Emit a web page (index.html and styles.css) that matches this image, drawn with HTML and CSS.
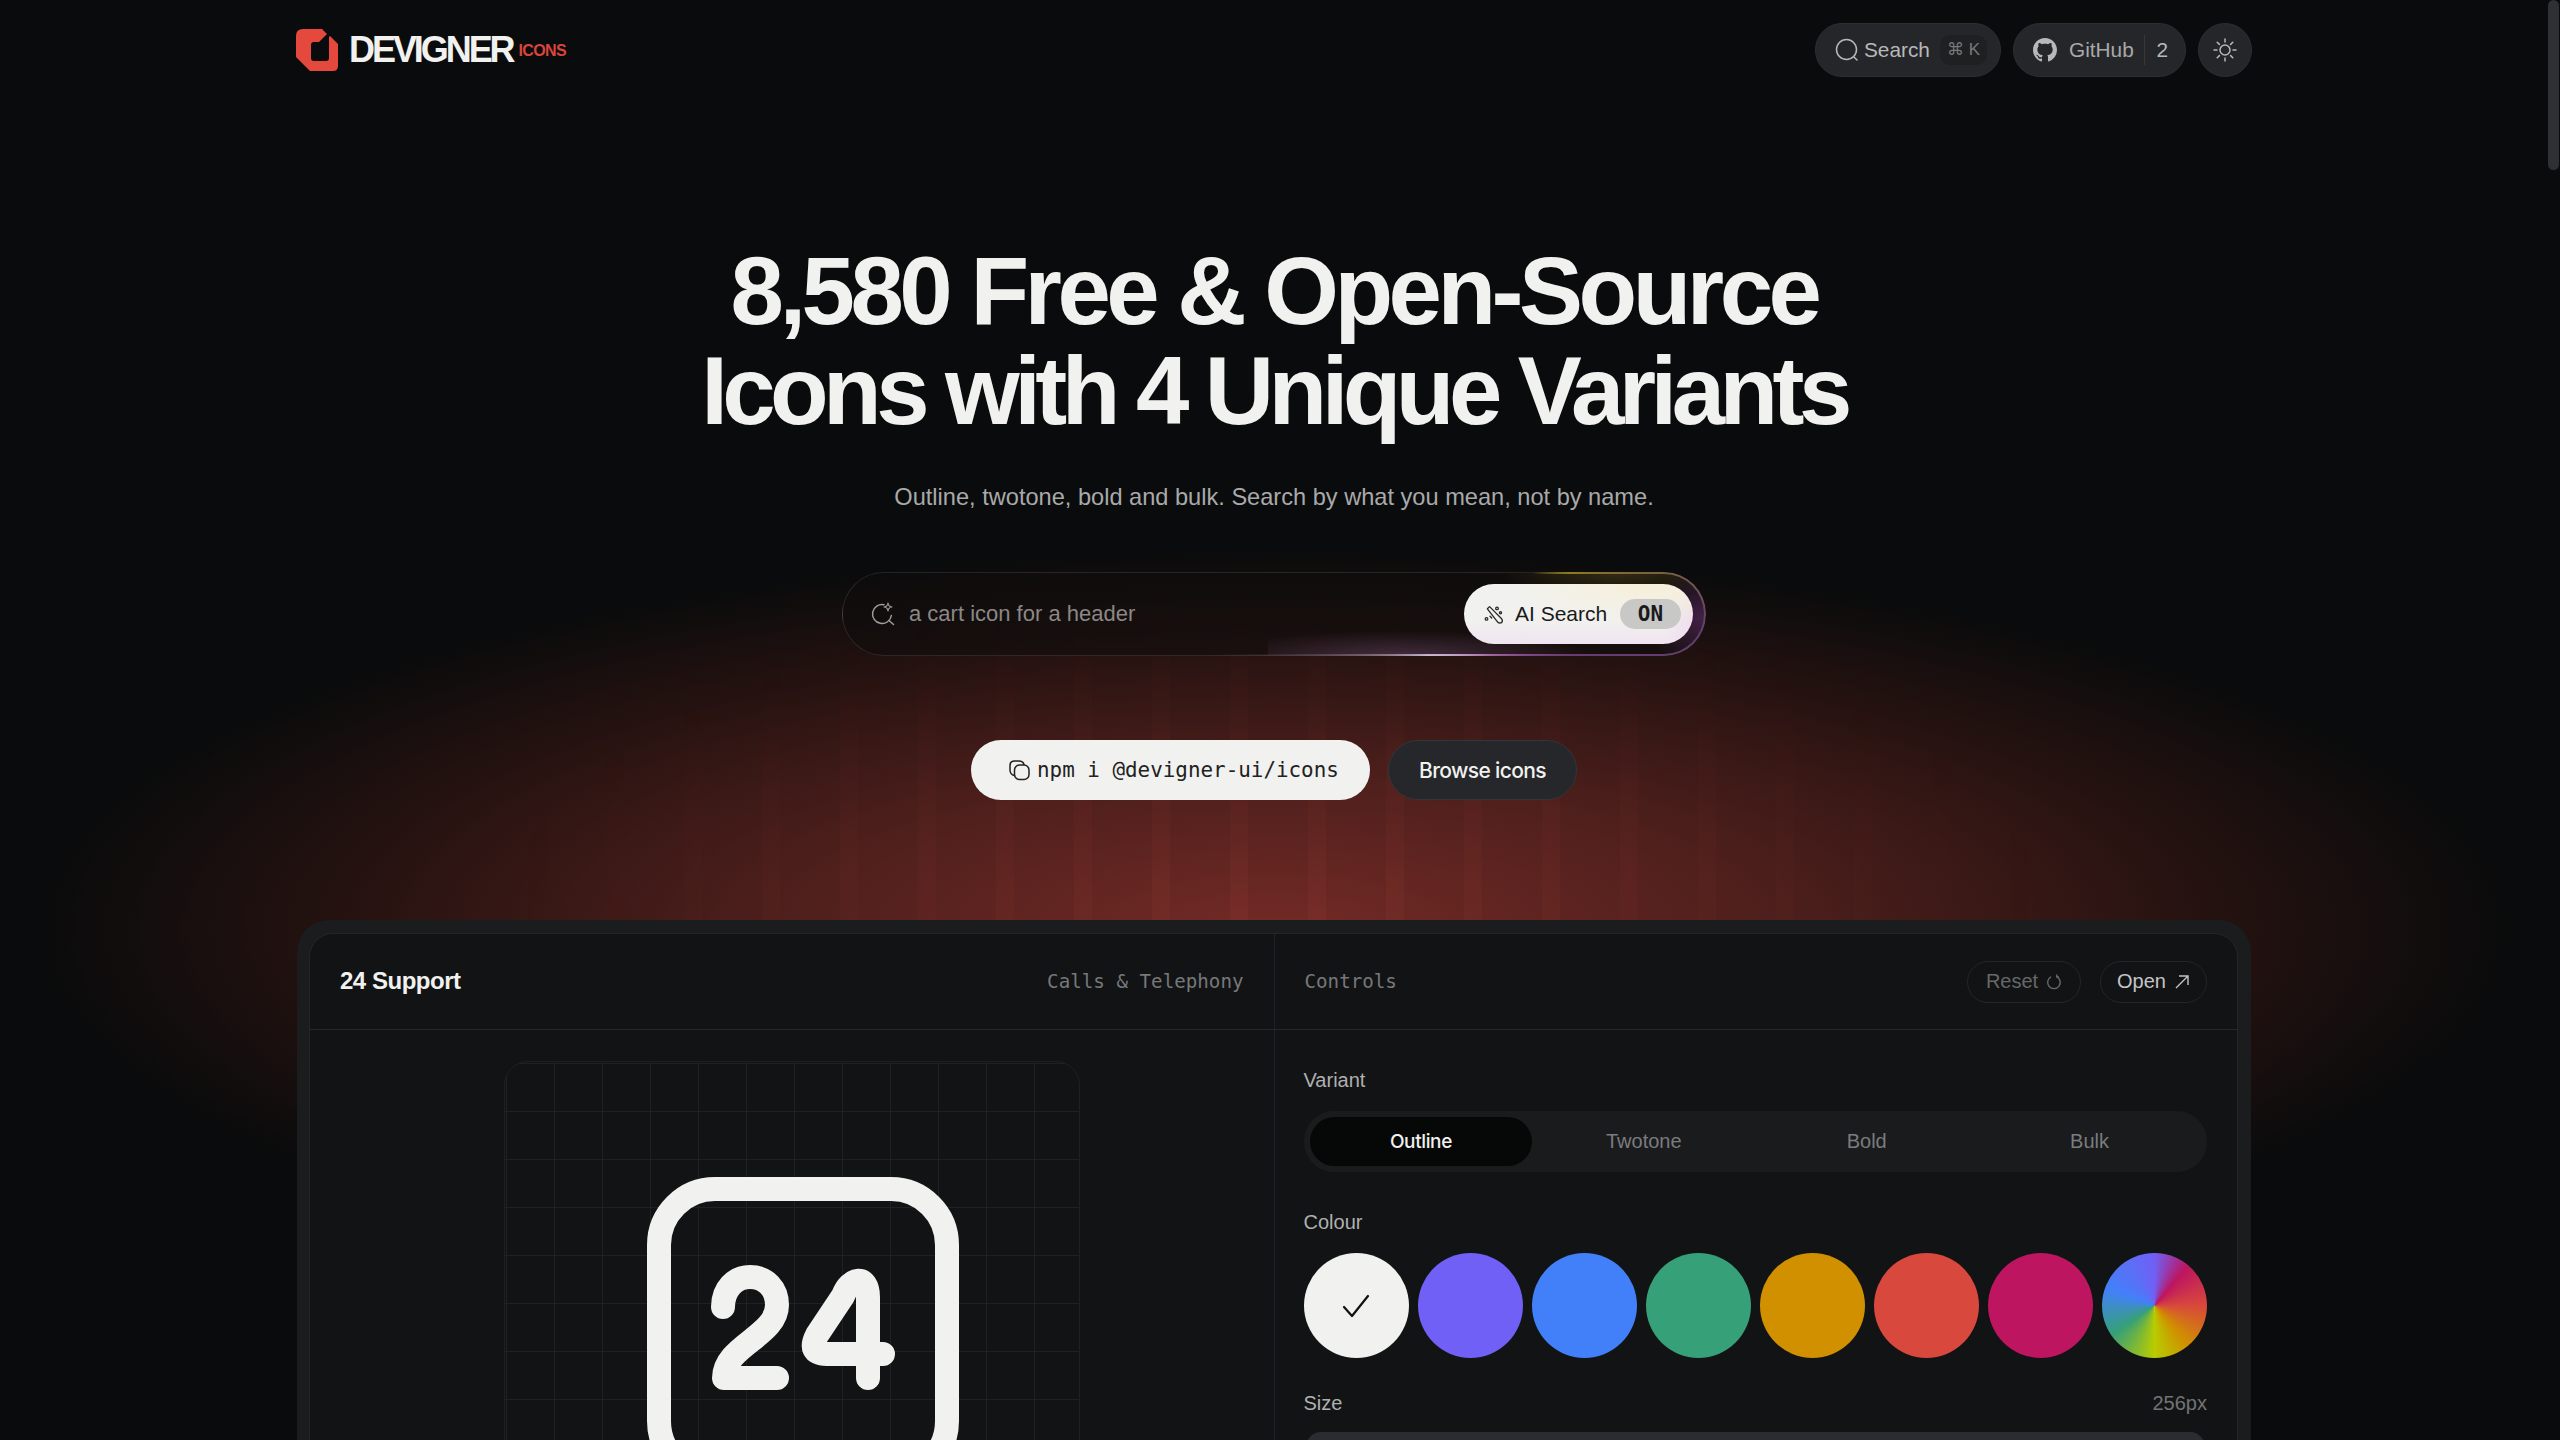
FILE: index.html
```html
<!DOCTYPE html>
<html lang="en">
<head>
    <meta charset="UTF-8">
    <meta name="viewport" content="width=device-width, initial-scale=1.0">
    <title>Devigner Icons</title>
    <link rel="stylesheet" href="styles.css">
</head>
<body>
    <div class="scroll-thumb"></div>

    <div class="page">
        <div class="glow"></div>

        <header class="nav">
            <a class="logo" href="#">
                <svg class="logo-mark" viewBox="0 0 42 42"><path d="M7 0H26L31 5L23 13H18Q15 13 15 16V29Q15 32 18 32H30Q33 32 33 29V8L34 7L42 15V37Q42 42 37 42H14L0 28V7Q0 0 7 0Z"/></svg>
                <span class="logo-name">DEVIGNER</span>
                <span class="logo-tag">ICONS</span>
            </a>
            <div class="nav-actions">
                <button class="nav-btn nav-search">
                    <svg class="icon-24" viewBox="0 0 24 24"><circle cx="11.5" cy="11.5" r="10"/><path d="M19 19l3 3"/></svg>
                    <span>Search</span>
                    <kbd class="kbd">⌘ K</kbd>
                </button>
                <button class="nav-btn nav-github">
                    <svg class="github-mark" viewBox="0 0 16 16"><path d="M8 0C3.58 0 0 3.58 0 8c0 3.54 2.29 6.53 5.47 7.59.4.07.55-.17.55-.38 0-.19-.01-.82-.01-1.49-2.01.37-2.53-.49-2.69-.94-.09-.23-.48-.94-.82-1.13-.28-.15-.68-.52-.01-.53.63-.01 1.08.58 1.23.82.72 1.21 1.87.87 2.33.66.07-.52.28-.87.51-1.07-1.78-.2-3.64-.89-3.64-3.95 0-.87.31-1.59.82-2.15-.08-.2-.36-1.02.08-2.12 0 0 .67-.21 2.2.82.64-.18 1.32-.27 2-.27.68 0 1.36.09 2 .27 1.53-1.04 2.2-.82 2.2-.82.44 1.1.16 1.92.08 2.12.51.56.82 1.27.82 2.15 0 3.07-1.87 3.75-3.65 3.95.29.25.54.73.54 1.48 0 1.07-.01 1.93-.01 2.2 0 .21.15.46.55.38A8.013 8.013 0 0016 8c0-4.42-3.58-8-8-8z"/></svg>
                    <span class="github-label">GitHub</span>
                    <span class="github-count">2</span>
                </button>
                <button class="nav-btn nav-theme">
                    <svg class="icon-24" viewBox="0 0 24 24"><circle cx="12" cy="12" r="5"/><path d="M12 1v3M12 20v3M1 12h3M20 12h3M4.2 4.2l2.2 2.2M17.6 17.6l2.2 2.2M4.2 19.8l2.2-2.2M17.6 6.4l2.2-2.2"/></svg>
                </button>
            </div>
        </header>

        <section class="hero">
            <h1>
                <span class="hero-line hero-line-top">8,580 Free &amp; Open-Source</span>
                <span class="hero-line hero-line-bottom">Icons with 4 Unique Variants</span>
            </h1>
            <p class="hero-sub">Outline, twotone, bold and bulk. Search by what you mean, not by name.</p>

            <div class="ai-bar">
                <div class="ai-input">
                    <svg class="icon-24" viewBox="0 0 24 24"><path d="M13 2.700A9.500 9.500 0 1 0 20.400 13.500"/><path d="M18 18.500l4.500 4"/><path class="icon-thin" d="M17 1c.3 2.700 1.300 3.700 4 4-2.700.3-3.700 1.300-4 4-.3-2.700-1.300-3.700-4-4 2.700-.3 3.700-1.300 4-4z"/></svg>
                    <span>a cart icon for a header</span>
                </div>
                <button class="ai-toggle">
                    <svg class="icon-wand" viewBox="0 0 24 24"><path d="M5 5.500L7.500 3L21 16.500Q23 19 21.500 21Q19.500 22.500 17 21Z"/><circle cx="16" cy="5" r="1.500"/><circle cx="20" cy="10" r="1.200"/><circle cx="4" cy="17" r="1.500"/><path d="M8 14l2 2"/></svg>
                    <span class="ai-label">AI Search</span>
                    <span class="ai-state">ON</span>
                </button>
            </div>

            <div class="cta-row">
                <button class="cta cta-install">
                    <svg class="icon-24" viewBox="0 0 24 24"><path d="M7.500 17.500Q3 16.500 3 12V7.500Q3 3 7.500 3H12Q16 3 17 6.500"/><rect x="7.500" y="7" width="14.500" height="14.500" rx="5"/></svg>
                    <span>npm i @devigner-ui/icons</span>
                </button>
                <button class="cta cta-browse">Browse icons</button>
            </div>
        </section>

        <section class="card">
            <div class="card-inner">
                <div class="pane">
                    <div class="pane-head">
                        <span class="icon-name">24 Support</span>
                        <span class="mono-note">Calls &amp; Telephony</span>
                    </div>
                    <div class="preview">
                        <div class="preview-grid">
                            <svg class="preview-icon" viewBox="0 0 576 576">
                                <rect x="154" y="127" width="288" height="288" rx="56"/>
                                <path d="M218 245C218 227 230 215 245 215C261 215 272 227 272 243C272 274 219 284 219 316L272 316"/>
                                <path d="M363 316V235C363 212 345 215 338 234L312 273Q302 292 322 292H378"/>
                            </svg>
                        </div>
                    </div>
                </div>

                <div class="pane pane-controls">
                    <div class="pane-head">
                        <span class="mono-note">Controls</span>
                        <div class="head-actions">
                            <button class="chip chip-muted">Reset
                                <svg class="icon-16" viewBox="0 0 16 16"><path d="M10.500 2.600A6.300 6.300 0 1 1 5 2.800"/><path d="M10.700 0.500v2.400h2.300"/></svg>
                            </button>
                            <button class="chip chip-open">Open
                                <svg class="icon-16" viewBox="0 0 16 16"><path d="M2 14L14 2M5 2h9v9"/></svg>
                            </button>
                        </div>
                    </div>
                    <div class="controls">
                        <div class="field-label">Variant</div>
                        <div class="segments">
                            <span class="segment active">Outline</span>
                            <span class="segment">Twotone</span>
                            <span class="segment">Bold</span>
                            <span class="segment">Bulk</span>
                        </div>

                        <div class="field-label colour-label">Colour</div>
                        <div class="swatches">
                            <span class="swatch swatch-white">
                                <svg class="icon-check" viewBox="0 0 28 28"><path d="M2 15l8 9L26 4"/></svg>
                            </span>
                            <span class="swatch swatch-violet"></span>
                            <span class="swatch swatch-blue"></span>
                            <span class="swatch swatch-green"></span>
                            <span class="swatch swatch-amber"></span>
                            <span class="swatch swatch-red"></span>
                            <span class="swatch swatch-pink"></span>
                            <span class="swatch swatch-multi"></span>
                        </div>

                        <div class="field-label size-label">
                            <span>Size</span>
                            <span class="size-value">256px</span>
                        </div>
                        <div class="slider"></div>
                    </div>
                </div>
            </div>
        </section>
    </div>
</body>
</html>
```

FILE: styles.css
```css
* {
    box-sizing: border-box;
}

html, body {
    margin: 0;
    height: 100%;
    overflow: hidden;
    background: #0a0b0c;
}

body {
    font-family: 'Liberation Sans', Inter, sans-serif;
    color: #f1f1ef;
    padding-right: 12px;
}

button {
    font: inherit;
    color: inherit;
    border: none;
    background: none;
    padding: 0;
}

svg {
    display: block;
    flex: none;
}

.scroll-thumb {
    position: fixed;
    top: 0;
    right: 1px;
    width: 11px;
    height: 170px;
    border-radius: 6px;
    background: #2f3033;
}

.page {
    position: relative;
    height: 1440px;
    padding: 0 296px;
    overflow: hidden;
}

/* red wash behind the hero */
.glow {
    position: absolute;
    inset: 0;
    background: radial-gradient(ellipse 1240px 380px at 1274px 930px, #732a26 0, #4e1f1c 40%, #241210 76%, transparent 100%);
}

.glow::before {
    content: "";
    position: absolute;
    inset: 0;
    background: linear-gradient(90deg, rgba(255, 110, 90, 0.06) 18px, transparent 18px) 60px 0 / 78px 100%;
    -webkit-mask-image: radial-gradient(ellipse 800px 350px at 1274px 930px, #000 0, transparent 100%);
    mask-image: radial-gradient(ellipse 800px 350px at 1274px 930px, #000 0, transparent 100%);
}

.nav,
.hero,
.card {
    position: relative;
}

/* nav */
.nav {
    display: flex;
    align-items: center;
    justify-content: space-between;
    padding-top: 23px;
}

.logo {
    display: flex;
    align-items: center;
    text-decoration: none;
}

.logo-mark {
    width: 42px;
    height: 42px;
    fill: #e5483d;
}

.logo-name {
    margin-left: 11px;
    font-weight: 700;
    font-size: 36px;
    letter-spacing: -0.085em;
    color: #f1f1ef;
}

.logo-tag {
    margin: 2px 0 0 6px;
    font-weight: 700;
    font-size: 16px;
    letter-spacing: -0.04em;
    color: #d8453b;
}

.nav-actions {
    display: flex;
    gap: 12px;
}

.nav-btn {
    display: flex;
    align-items: center;
    height: 54px;
    border-radius: 27px;
    border: 1px solid #2d2e31;
    background: #252629;
    color: #b8b8ba;
    font-size: 20.8px;
}

.icon-24 {
    width: 24px;
    height: 24px;
    fill: none;
    stroke: currentColor;
    stroke-width: 1.5;
    stroke-linecap: round;
    stroke-linejoin: round;
}

.icon-thin {
    stroke-width: 1.2;
}

.nav-search {
    width: 186px;
    padding: 0 13px 0 19px;
    gap: 5px;
}

.kbd {
    display: block;
    flex: none;
    margin-left: auto;
    padding: 0 7px;
    height: 30px;
    line-height: 30px;
    border-radius: 10px;
    background: #1f2022;
    color: #77787b;
    font-family: 'Liberation Sans', 'DejaVu Sans', sans-serif;
    font-size: 17px;
    white-space: nowrap;
}

.nav-github {
    width: 173px;
    padding: 0 17px 0 19px;
}

.github-mark {
    width: 24px;
    height: 24px;
    fill: #b8b8ba;
}

.github-label {
    margin-left: 12px;
    color: #a8a8aa;
}

.github-count {
    margin-left: auto;
    padding-left: 11px;
    border-left: 1px solid #36373a;
    line-height: 30px;
}

.nav-theme {
    width: 54px;
    justify-content: center;
}

/* hero */
.hero {
    text-align: center;
}

.hero h1 {
    margin: 164px 0 0;
    font-size: 96px;
    line-height: 100px;
    font-weight: 700;
}

.hero-line {
    display: block;
}

.hero-line-top {
    letter-spacing: -0.047em;
}

.hero-line-bottom {
    letter-spacing: -0.058em;
}

.hero-sub {
    margin: 40px 0 0;
    font-size: 23.6px;
    line-height: 32px;
    color: #a9a9a9;
}

.ai-bar {
    position: relative;
    display: flex;
    align-items: center;
    justify-content: space-between;
    width: 864px;
    height: 84px;
    margin: 59px auto 0;
    padding: 0 12px 0 28px;
    border-radius: 42px;
    border: 1px solid rgba(255, 255, 255, 0.1);
    background:
        radial-gradient(ellipse 60px 50px at 100% 55%, rgba(110, 50, 120, 0.55), transparent),
        radial-gradient(ellipse 120px 24px at 90% 0, rgba(120, 105, 30, 0.35), transparent),
        rgba(14, 12, 12, 0.55);
    text-align: left;
}

/* coloured rim, only shows on the right half */
.ai-bar::before {
    content: "";
    position: absolute;
    inset: -1px;
    padding: 2px;
    border-radius: 42px;
    background: conic-gradient(from 0deg at 76% 50%, transparent 40deg, #8f7d1e 60deg, #5f3f70 95deg, #6b3a70 120deg, #a060a0 190deg, #c8bcd0 240deg, transparent 262deg, transparent 360deg);
    -webkit-mask: linear-gradient(#000 0 0) content-box, linear-gradient(#000 0 0);
    -webkit-mask-composite: xor;
    mask-composite: exclude;
}

/* soft light along the bottom edge */
.ai-bar::after {
    content: "";
    position: absolute;
    left: 425px;
    right: 60px;
    bottom: 0;
    height: 24px;
    border-radius: 0 0 30px 0;
    background: radial-gradient(ellipse 50% 100% at 35% 100%, rgba(190, 130, 200, 0.24), transparent);
}

.ai-input {
    display: flex;
    align-items: center;
    gap: 14px;
    color: #8b8886;
    font-size: 22px;
}

.ai-input .icon-24 {
    color: #a09d9b;
}

.ai-toggle {
    position: relative;
    z-index: 1;
    display: flex;
    align-items: center;
    width: 229px;
    height: 60px;
    padding: 0 12px 0 19px;
    border-radius: 30px;
    background:
        radial-gradient(ellipse 60% 70% at 80% 0, #f6efd9, transparent),
        radial-gradient(ellipse 30px 40px at 100% 60%, #efdcee, transparent),
        linear-gradient(#f1f1ef 60%, #f0e4f0);
    color: #1a1a1c;
    font-size: 21px;
}

.icon-wand {
    width: 21px;
    height: 21px;
    fill: none;
    stroke: #2a2a2c;
    stroke-width: 1.5;
    stroke-linejoin: round;
    stroke-linecap: round;
}

.ai-label {
    margin-left: 11px;
}

.ai-state {
    width: 61px;
    height: 30px;
    margin-left: auto;
    border-radius: 15px;
    background: #c8c8c6;
    font-family: 'DejaVu Sans Mono', monospace;
    font-weight: 700;
    font-size: 21px;
    line-height: 30px;
    text-align: center;
}

.cta-row {
    display: flex;
    justify-content: center;
    gap: 18px;
    margin-top: 84px;
}

.cta {
    display: flex;
    align-items: center;
    height: 60px;
    border-radius: 30px;
}

.cta-install {
    width: 399px;
    padding-left: 36px;
    gap: 6px;
    background: #f1f1ef;
    color: #222;
    font-family: 'DejaVu Sans Mono', monospace;
    font-size: 20.9px;
}

.cta-browse {
    width: 189px;
    justify-content: center;
    border: 1px solid #33353a;
    background: #25272a;
    font-family: Inter, sans-serif;
    font-size: 21px;
    font-weight: 500;
    letter-spacing: -0.03em;
}

/* preview card */
.card {
    margin: 120px 1px 0;
    padding: 13px 13px 0 12px;
    height: 700px;
    border-radius: 32px;
    background: #1a1c1e;
}

.card-inner {
    display: grid;
    grid-template-columns: 1fr 1fr;
    height: 100%;
    border: 1px solid #232527;
    border-radius: 24px;
    background: #121315;
}

.pane-controls {
    border-left: 1px solid #202225;
}

.pane-head {
    display: flex;
    align-items: center;
    justify-content: space-between;
    height: 96px;
    padding: 0 30px;
    border-bottom: 1px solid #26282a;
}

.icon-name {
    margin-bottom: 2px;
    font-size: 24px;
    font-weight: 700;
    letter-spacing: -0.02em;
}

.mono-note {
    font-family: 'DejaVu Sans Mono', monospace;
    font-size: 19.2px;
    color: #77787a;
}

.head-actions {
    display: flex;
    gap: 19px;
}

.chip {
    display: flex;
    align-items: center;
    justify-content: center;
    gap: 8px;
    width: 114px;
    height: 42px;
    border: 1px solid #232527;
    border-radius: 21px;
    font-size: 20px;
    color: #c4c4c6;
}

.chip-open {
    width: 107px;
}

.chip-muted {
    color: #67686a;
}

.icon-16 {
    width: 16px;
    height: 16px;
    fill: none;
    stroke: currentColor;
    stroke-width: 1.4;
}

.preview {
    display: flex;
    justify-content: center;
    padding-top: 31px;
}

.preview-grid {
    width: 576px;
    height: 576px;
    flex: none;
    border: 1px solid #1e2022;
    border-radius: 24px;
    background:
        linear-gradient(90deg, #1f2123 1px, transparent 1px) 1px 1px / 48px 48px,
        linear-gradient(#1f2123 1px, transparent 1px) 1px 1px / 48px 48px;
}

.preview-icon {
    width: 576px;
    height: 576px;
    fill: none;
    stroke: #f1f1ef;
    stroke-width: 24;
    stroke-linecap: round;
    stroke-linejoin: round;
}

.controls {
    padding: 38px 30px 0 29px;
}

.field-label {
    font-size: 20px;
    line-height: 24px;
    color: #b0b0b0;
}

.segments {
    display: grid;
    grid-template-columns: repeat(4, 1fr);
    height: 61px;
    margin-top: 19px;
    padding: 6px;
    border-radius: 30px;
    background: #1a1b1d;
}

.segment {
    display: flex;
    align-items: center;
    justify-content: center;
    border-radius: 25px;
    font-size: 20px;
    color: #7b7c7e;
}

.segment.active {
    background: #060707;
    color: #f1f1ef;
    font-family: Inter, sans-serif;
    font-size: 19px;
    font-weight: 500;
    letter-spacing: -0.02em;
}

.colour-label {
    margin-top: 38px;
}

.swatches {
    display: flex;
    justify-content: space-between;
    margin-top: 19px;
}

.swatch {
    display: flex;
    align-items: center;
    justify-content: center;
    width: 105px;
    height: 105px;
    border-radius: 50%;
}

.swatch-white { background: #f1f1ef; }
.swatch-violet { background: #7060f5; }
.swatch-blue { background: #4280f9; }
.swatch-green { background: #36a078; }
.swatch-amber { background: #d09000; }
.swatch-red { background: #d8483c; }
.swatch-pink { background: #bd1560; }
.swatch-multi {
    background: conic-gradient(#7060f5, #bd1560 40deg, #d8483c 90deg, #d09000 140deg, #b8cc00 180deg, #36a078 235deg, #4280f9 290deg, #7060f5 360deg);
}

.icon-check {
    width: 28px;
    height: 28px;
    fill: none;
    stroke: #111;
    stroke-width: 2.2;
    stroke-linecap: round;
    stroke-linejoin: round;
}

.size-label {
    display: flex;
    justify-content: space-between;
    margin-top: 33px;
}

.size-value {
    color: #727375;
}

.slider {
    height: 30px;
    margin: 17px 2px 0;
    border-radius: 15px;
    background: #2b2c2f;
}
```
